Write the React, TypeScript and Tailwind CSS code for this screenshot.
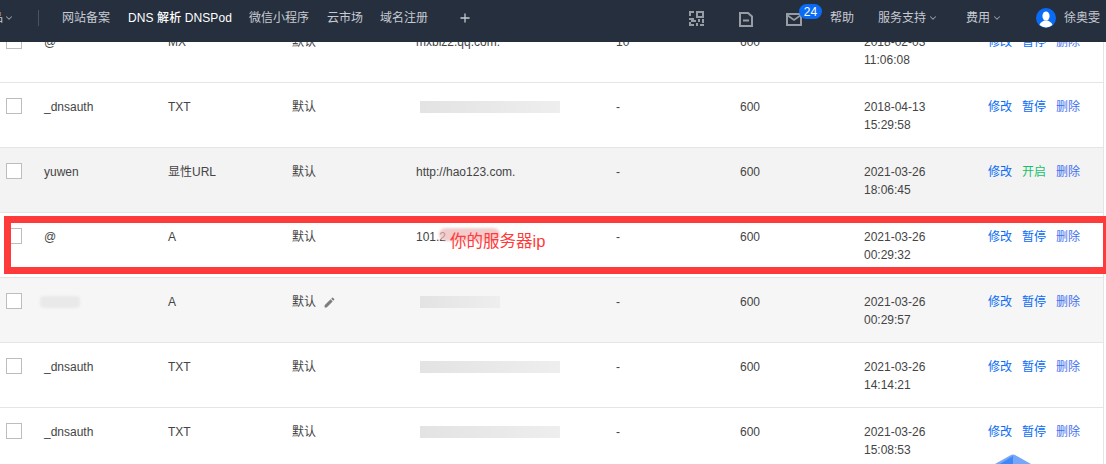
import React from "react";
import { ChevronDown, Plus } from "lucide-react";

type Row = {
  host: string; type: string; line: string; value: string; mx: string; ttl: string;
  date: string; time: string; gray?: string; blurHost?: boolean; blurValue?: number; pencil?: boolean; on?: boolean;
};

const rows: Row[] = [
  { host: "@", type: "MX", line: "默认", value: "mxbiz2.qq.com.", mx: "10", ttl: "600", date: "2018-02-03", time: "11:06:08" },
  { host: "_dnsauth", type: "TXT", line: "默认", value: "", blurValue: 140, mx: "-", ttl: "600", date: "2018-04-13", time: "15:29:58" },
  { host: "yuwen", type: "显性URL", line: "默认", value: "http://hao123.com.", mx: "-", ttl: "600", date: "2021-03-26", time: "18:06:45", gray: "bg-[#f3f3f3]", on: true },
  { host: "@", type: "A", line: "默认", value: "101.2", mx: "-", ttl: "600", date: "2021-03-26", time: "00:29:32" },
  { host: "", blurHost: true, type: "A", line: "默认", value: "", blurValue: 80, mx: "-", ttl: "600", date: "2021-03-26", time: "00:29:57", gray: "bg-[#f6f6f6]", pencil: true },
  { host: "_dnsauth", type: "TXT", line: "默认", value: "", blurValue: 140, mx: "-", ttl: "600", date: "2021-03-26", time: "14:14:21" },
  { host: "_dnsauth", type: "TXT", line: "默认", value: "", blurValue: 140, mx: "-", ttl: "600", date: "2021-03-26", time: "15:08:53" },
];

function NavChevron() {
  return <ChevronDown size={10} strokeWidth={2.5} className="text-[#9aa3af]" />;
}

function QrIcon() {
  return (
    <svg width="15" height="15" viewBox="0 0 15 15" fill="#989da5">
      <path d="M0 0h5v2H2v3H0z" />
      <path fillRule="evenodd" d="M7 0h8v7H7zM9 2v3h4V2z" />
      <path d="M0 7h5v2h2v2H2v-2H0zM9 8h2v3H9zM13 8h2v4h-2zM0 11h2v2h3v2H0zM7 12h2v3H7zM11 13h4v2h-4z" />
    </svg>
  );
}

function DocIcon() {
  return (
    <svg width="14" height="15" viewBox="0 0 14 15" fill="none" stroke="#989da5" strokeWidth="2">
      <path d="M1 1h8l4 3.500V14H1z" />
      <path d="M4 8.500h6" />
    </svg>
  );
}

function MailIcon() {
  return (
    <svg width="16" height="13" viewBox="0 0 16 13" fill="none" stroke="#989da5" strokeWidth="2">
      <rect x="1" y="1" width="14" height="11" />
      <path d="M1 2l7 5 7-5" strokeWidth="1.6" />
    </svg>
  );
}

function Avatar() {
  return (
    <svg width="20" height="20" viewBox="0 0 20 20" className="shrink-0">
      <circle cx="10" cy="10" r="10" fill="#0a6cf5" />
      <ellipse cx="10" cy="8" rx="3.600" ry="4.600" fill="#fff" />
      <path d="M3.500 17c1-3 3.500-3.600 5-4.400h3c1.500.8 4 1.400 5 4.400a10 10 0 0 1-13 0z" fill="#fff" />
    </svg>
  );
}

function Pencil() {
  return (
    <svg width="13" height="13" viewBox="0 0 24 24" fill="#7d7d7d">
      <path d="M3 17.250V21h3.750L17.810 9.940l-3.750-3.750L3 17.250zM20.710 7.040a1 1 0 0 0 0-1.410l-2.340-2.340a1 1 0 0 0-1.410 0l-1.830 1.830 3.750 3.750 1.830-1.830z" />
    </svg>
  );
}

function TableRow({ r }: { r: Row }) {
  return (
    <div className={`grid h-[65px] grid-cols-[44px_124px_124px_124px_200px_124px_124px_124px_1fr] border-b border-[#e5e5e5] pt-[15px] text-[12px] leading-[18px] text-[#444] ${r.gray ?? "bg-white"}`}>
      <div className="pl-[6px]">
        <div className="h-4 w-4 border border-[#bdbdbd] bg-white" />
      </div>
      <div>
        {r.blurHost ? <div className="ml-[-4px] mt-[3px] h-3 w-10 rounded-sm bg-[#e9e9e9] blur-[1px]" /> : r.host}
      </div>
      <div>{r.type}</div>
      <div className="flex items-center gap-[7px] self-start">
        {r.line}
        {r.pencil && <Pencil />}
      </div>
      <div className="whitespace-nowrap">
        {r.blurValue ? (
          <div className="ml-1 mt-[3px] h-[12px] bg-linear-to-r from-[#e3e3e3] to-[#eeeeee]" style={{ width: r.blurValue }} />
        ) : (
          r.value
        )}
      </div>
      <div>{r.mx}</div>
      <div>{r.ttl}</div>
      <div>
        <div>{r.date}</div>
        <div>{r.time}</div>
      </div>
      <div className="flex gap-[10px] self-start whitespace-nowrap">
        <span className="text-[#0a6cf5]">修改</span>
        {r.on ? <span className="text-[#15c26b]">开启</span> : <span className="text-[#0a6cf5]">暂停</span>}
        <span className="text-[#3f6ff0]">删除</span>
      </div>
    </div>
  );
}

export default function App() {
  return (
    <div
      className="relative flex h-[464px] w-[1106px] flex-col overflow-hidden bg-white"
      style={{ fontFamily: '"Liberation Sans", "Noto Sans CJK SC", sans-serif' }}
    >
      <header className="z-10 flex h-[42px] shrink-0 items-center justify-between bg-[#262f3e] pb-[6px] text-[12px] text-[#c6cbd2]">
        <div className="flex items-center">
          <div className="ml-[-9px] flex w-[47px] items-center gap-[1px]">
            <span>品</span>
            <NavChevron />
          </div>
          <div className="h-4 w-px bg-[#4a5361]" />
          <div className="ml-[23px] flex items-center whitespace-nowrap">
            <span>网站备案</span>
            <span className="ml-[18px] font-medium tracking-[0.1px] text-white">DNS 解析 DNSPod</span>
            <span className="ml-[17px]">微信小程序</span>
            <span className="ml-[18px]">云市场</span>
            <span className="ml-[17px]">域名注册</span>
            <Plus size={14} strokeWidth={2.2} className="ml-[30px] text-[#c6cbd2]" />
          </div>
        </div>
        <div className="mr-[-12px] flex items-center whitespace-nowrap">
          <QrIcon />
          <span className="ml-[35px] mt-[3px]"><DocIcon /></span>
          <div className="relative ml-[33px] mr-[28px] mt-[3px] flex">
            <MailIcon />
            <span className="absolute left-[13px] top-[-9px] flex h-[15px] w-[23px] items-center justify-center rounded-full bg-[#0a6cf5] text-[12px] font-medium text-white">24</span>
          </div>
          <span>帮助</span>
          <div className="ml-[24px] flex items-center gap-[2px]">服务支持 <NavChevron /></div>
          <div className="ml-[28px] flex items-center gap-[2px]">费用 <NavChevron /></div>
          <div className="ml-[34px] flex items-center gap-[8px]">
            <Avatar />
            <span>徐奥雯</span>
            <NavChevron />
          </div>
        </div>
      </header>

      <main className="mt-[-24px] w-[1104px] border-r border-[#e5e5e5]">
        {rows.map((r, i) => (
          <TableRow key={i} r={r} />
        ))}
      </main>

      <div className="absolute left-[4px] top-[216px] h-[58px] w-[1106px] border-[7px] border-[#ff3a3a]">
        <div className="absolute left-[428px] top-[5px] h-[13px] w-[61px] rounded-full bg-[#eeb8b8]/70 blur-[1px]" />
        <span className="absolute left-[439px] top-[8px] text-[16.500px] leading-[20px] text-[#ff3a3a]">你的服务器ip</span>
      </div>

      <svg className="absolute left-[995px] top-[454px]" width="36" height="10" viewBox="0 0 36 10">
        <path d="M0 10 L16 1 Q18 0 20 1 L36 10 Z" fill="#76a6f8" />
        <path d="M5 10 L18 2 V10 Z" fill="#3f86f8" />
      </svg>
    </div>
  );
}
